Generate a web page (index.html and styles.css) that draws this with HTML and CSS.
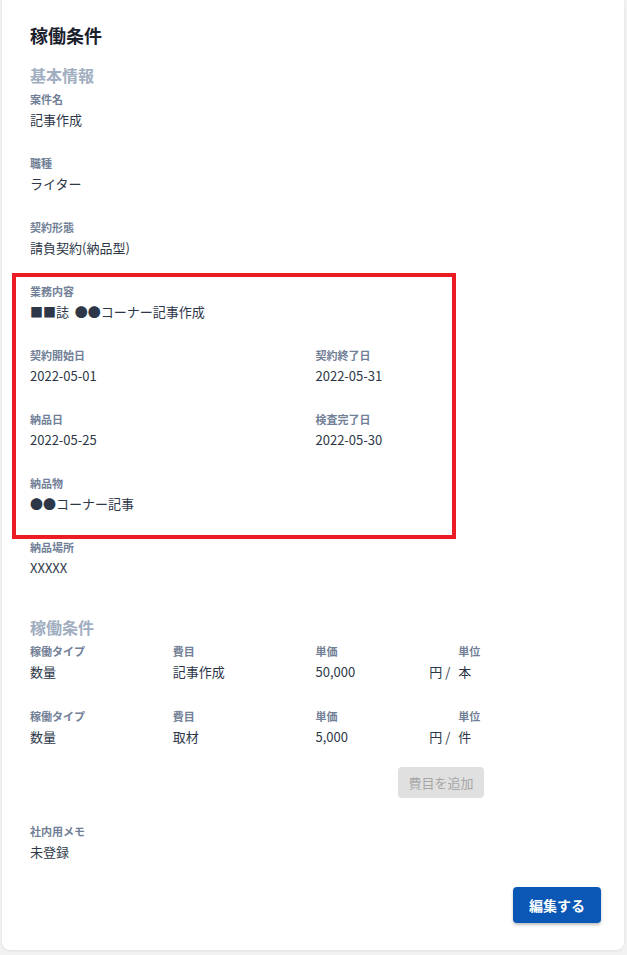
FILE: index.html
```html
<!DOCTYPE html>
<html lang="ja">
<head>
  <meta charset="UTF-8">
  <meta name="viewport" content="width=device-width, initial-scale=1.0">
  <title>稼働条件</title>
  <link rel="stylesheet" href="styles.css">
</head>
<body>
  <div class="card">
    <h2 class="card-title">稼働条件</h2>

    <h3 class="section-title">基本情報</h3>
    <div class="fields">
      <div class="field full">
        <div class="label">案件名</div>
        <div class="value">記事作成</div>
      </div>
      <div class="field full">
        <div class="label">職種</div>
        <div class="value">ライター</div>
      </div>
      <div class="field full">
        <div class="label">契約形態</div>
        <div class="value">請負契約(納品型)</div>
      </div>
      <div class="field full">
        <div class="label">業務内容</div>
        <div class="value">■■誌&nbsp; ●●コーナー記事作成</div>
      </div>
      <div class="field">
        <div class="label">契約開始日</div>
        <div class="value">2022-05-01</div>
      </div>
      <div class="field">
        <div class="label">契約終了日</div>
        <div class="value">2022-05-31</div>
      </div>
      <div class="field">
        <div class="label">納品日</div>
        <div class="value">2022-05-25</div>
      </div>
      <div class="field">
        <div class="label">検査完了日</div>
        <div class="value">2022-05-30</div>
      </div>
      <div class="field full">
        <div class="label">納品物</div>
        <div class="value">●●コーナー記事</div>
      </div>
      <div class="field full">
        <div class="label">納品場所</div>
        <div class="value">XXXXX</div>
      </div>
    </div>

    <h3 class="section-title work-title">稼働条件</h3>
    <div class="cost-list">
      <div class="cost-row">
        <div class="field">
          <div class="label">稼働タイプ</div>
          <div class="value">数量</div>
        </div>
        <div class="field">
          <div class="label">費目</div>
          <div class="value">記事作成</div>
        </div>
        <div class="field">
          <div class="label">単価</div>
          <div class="value price"><span>50,000</span><span>円 /</span></div>
        </div>
        <div class="field">
          <div class="label">単位</div>
          <div class="value">本</div>
        </div>
      </div>
      <div class="cost-row">
        <div class="field">
          <div class="label">稼働タイプ</div>
          <div class="value">数量</div>
        </div>
        <div class="field">
          <div class="label">費目</div>
          <div class="value">取材</div>
        </div>
        <div class="field">
          <div class="label">単価</div>
          <div class="value price"><span>5,000</span><span>円 /</span></div>
        </div>
        <div class="field">
          <div class="label">単位</div>
          <div class="value">件</div>
        </div>
      </div>
    </div>

    <div class="add-row">
      <button class="btn-add" disabled>費目を追加</button>
    </div>

    <div class="field memo">
      <div class="label">社内用メモ</div>
      <div class="value">未登録</div>
    </div>

    <div class="actions">
      <button class="btn-edit">編集する</button>
    </div>

    <div class="highlight"></div>
  </div>
</body>
</html>
```

FILE: styles.css
```css
* {
  margin: 0;
  padding: 0;
  box-sizing: border-box;
  font-family: 'Noto Sans CJK JP', 'Noto Sans', sans-serif;
}

body {
  background: #f2f2f2;
  color: #2d3748;
}

.card {
  position: relative;
  background: #fff;
  margin: 0 3px 5px 2px;
  padding: 23px 23px 27px 28px;
  border-radius: 0 0 8px 8px;
  box-shadow: 0 1px 3px rgba(0, 0, 0, 0.08);
}

.card-title {
  font-size: 18px;
  line-height: 24px;
  font-weight: 700;
  color: #1a202c;
  margin-bottom: 16px;
}

.section-title {
  font-size: 16px;
  line-height: 24px;
  font-weight: 700;
  color: #a0aec0;
  margin-bottom: 6px;
}

.work-title {
  margin-top: 37px;
}

.fields {
  display: grid;
  grid-template-columns: 1fr 1fr;
  row-gap: 27px;
}

.field.full {
  grid-column: 1 / -1;
}

.label {
  font-size: 11px;
  line-height: 12px;
  font-weight: 700;
  color: #718096;
  margin-bottom: 5px;
}

.value {
  font-size: 13px;
  line-height: 20px;
  color: #2d3748;
}

.cost-list {
  display: flex;
  flex-direction: column;
  gap: 28px;
}

.cost-row {
  display: grid;
  grid-template-columns: repeat(4, 1fr);
}

.price {
  display: flex;
  justify-content: space-between;
  padding-right: 8px;
}

.add-row {
  display: flex;
  justify-content: flex-end;
  padding-right: 117px;
  margin-top: 20px;
}

.btn-add {
  width: 86px;
  height: 31px;
  border: none;
  border-radius: 4px;
  background: #e0e0e0;
  color: #a6a6a6;
  font-size: 13px;
}

.memo {
  margin-top: 27px;
}

.actions {
  display: flex;
  justify-content: flex-end;
  margin-top: 25px;
}

.btn-edit {
  width: 88px;
  height: 36px;
  border: none;
  border-radius: 4px;
  background: #0b57b5;
  color: #fff;
  font-size: 14px;
  font-weight: 700;
  box-shadow: 0 2px 3px rgba(0, 0, 0, 0.25);
  cursor: pointer;
}

.highlight {
  position: absolute;
  left: 10px;
  top: 273px;
  width: 444px;
  height: 266px;
  border: 4px solid #ec1c24;
  pointer-events: none;
}
```
